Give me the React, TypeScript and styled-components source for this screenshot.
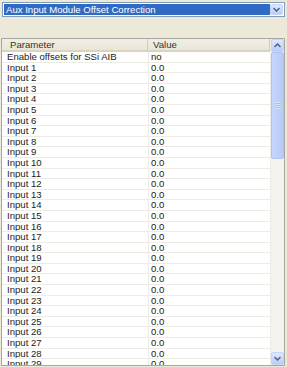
import React from 'react';
import styled, { createGlobalStyle } from 'styled-components';

const GlobalStyle = createGlobalStyle`
  html, body {
    margin: 0;
    padding: 0;
    background: #ece9d8;
    overflow: hidden;
  }
  * { box-sizing: border-box; }
`;

const Window = styled.div`
  width: 287px;
  height: 367px;
  display: flex;
  flex-direction: column;
  padding: 2px 2px 1px 1px;
  font-family: 'Liberation Sans', Arial, sans-serif;
  font-size: 9.6px;
  color: #222;
`;

const Combo = styled.div`
  height: 15px;
  display: flex;
  border: 1px solid #7f9db9;
  background: #fff;
  padding: 1px;
  margin-left: 1px;
`;

const ComboText = styled.div`
  flex: 1;
  background: #316ac5;
  color: #fff;
  padding-left: 2px;
  line-height: 11px;
  white-space: nowrap;
`;

const ArrowButton = styled.div<{ $tall?: boolean }>`
  width: 13px;
  height: ${({ $tall }) => ($tall ? '13px' : 'auto')};
  display: flex;
  align-items: center;
  justify-content: center;
  background: linear-gradient(#dfe8fc, #b9cdf7);
  border: 1px solid #c3d3fd;
  border-radius: 2px;
`;

const Spacer = styled.div`
  height: 21px;
`;

const ListView = styled.div`
  flex: 1;
  display: flex;
  border: 1px solid #a8a8a0;
  background: #fff;
  overflow: hidden;
`;

const Table = styled.div`
  flex: 1;
  display: flex;
  flex-direction: column;
  overflow: hidden;
`;

const Header = styled.div`
  height: 13px;
  flex-shrink: 0;
  display: grid;
  grid-template-columns: 146px 1fr;
  background: linear-gradient(#f0efe6, #e9e6d6);
  border-bottom: 2px solid #d8d4c2;
  color: #333;
`;

const HeaderCell = styled.div`
  padding-left: 8px;
  line-height: 11px;
  border-right: 1px solid #d0ccbc;

  & + & {
    padding-left: 5px;
  }
`;

const Row = styled.div`
  height: 10.6px;
  flex-shrink: 0;
  display: grid;
  grid-template-columns: 146px 1fr;
  border-bottom: 1px solid #ecebe4;
  line-height: 10px;
`;

const Cell = styled.div`
  padding-left: 5px;
  white-space: nowrap;
  overflow: hidden;
`;

const ValueCell = styled(Cell)`
  border-left: 1px solid #ecebe4;
  padding-left: 2px;
`;

const ScrollBar = styled.div`
  width: 14px;
  display: flex;
  flex-direction: column;
  background: #f4f3ee;
  border-left: 1px solid #eeede5;
`;

const Track = styled.div`
  flex: 1;
  display: flex;
  flex-direction: column;
`;

const Thumb = styled.div`
  height: 107px;
  background: linear-gradient(90deg, #c6d5fb, #b7cbf6);
  border: 1px solid #aec3f3;
  border-radius: 2px;
  display: flex;
  align-items: center;
  justify-content: center;
`;

const Grip = styled.div`
  width: 6px;
  height: 7px;
  background: repeating-linear-gradient(#d6e1fc 0 1px, #a8bdf0 1px 2px);
`;

const Chevron: React.FC<{ up?: boolean }> = ({ up }) => (
  <svg width="7" height="5" viewBox="0 0 7 5">
    <path
      d={up ? 'M0.5 4 L3.5 1 L6.5 4' : 'M0.5 1 L3.5 4 L6.5 1'}
      fill="none"
      stroke="#4d6185"
      strokeWidth="1.5"
    />
  </svg>
);

const rows: [string, string][] = [
  ['Enable offsets for SSi AIB', 'no'],
  ...Array.from({ length: 30 }, (_, i) => [`Input ${i + 1}`, '0.0'] as [string, string]),
];

export default function App() {
  return (
    <>
      <GlobalStyle />
      <Window>
        <Combo>
          <ComboText>Aux Input Module Offset Correction</ComboText>
          <ArrowButton>
            <Chevron />
          </ArrowButton>
        </Combo>
        <Spacer />
        <ListView>
          <Table>
            <Header>
              <HeaderCell>Parameter</HeaderCell>
              <HeaderCell>Value</HeaderCell>
            </Header>
            {rows.map(([name, value]) => (
              <Row key={name}>
                <Cell>{name}</Cell>
                <ValueCell>{value}</ValueCell>
              </Row>
            ))}
          </Table>
          <ScrollBar>
            <ArrowButton $tall>
              <Chevron up />
            </ArrowButton>
            <Track>
              <Thumb>
                <Grip />
              </Thumb>
            </Track>
            <ArrowButton $tall>
              <Chevron />
            </ArrowButton>
          </ScrollBar>
        </ListView>
      </Window>
    </>
  );
}
